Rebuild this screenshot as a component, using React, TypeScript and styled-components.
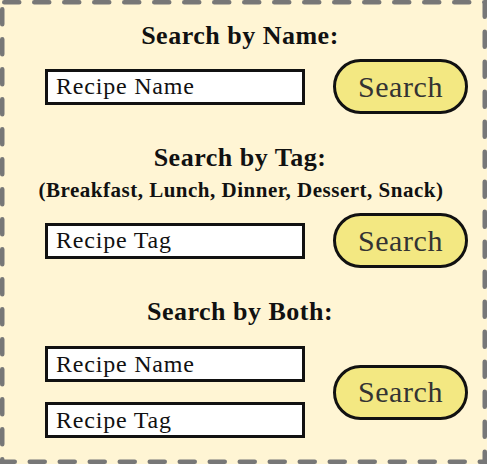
import React from "react";
import styled, { createGlobalStyle } from "styled-components";

const Global = createGlobalStyle`
  html, body { margin: 0; padding: 0; background: #ffffff; }
  * { box-sizing: border-box; }
`;

const Panel = styled.div`
  position: relative;
  width: 487px;
  height: 464px;
  background: #fff5d4;
  padding: 21px 14px 0 45px;
  display: flex;
  flex-direction: column;
  font-family: "Liberation Serif", "Times New Roman", serif;
  color: #111111;
`;

const DashedEdge = styled.svg`
  position: absolute;
  inset: 0;
  width: 100%;
  height: 100%;
  pointer-events: none;
`;

const Section = styled.section<{ $gap: number }>`
  display: flex;
  flex-direction: column;
  margin-top: ${(p) => p.$gap}px;
`;

const Heading = styled.h2`
  margin: 0 0 0 -38px;
  height: 30px;
  line-height: 30px;
  font-size: 26px;
  font-weight: bold;
  letter-spacing: 0.5px;
  text-align: center;
`;

const Sub = styled.div`
  margin: 6px 0 0 -36px;
  height: 22px;
  line-height: 22px;
  font-size: 21px;
  font-weight: bold;
  letter-spacing: 0.5px;
  text-align: center;
`;

const Row = styled.div<{ $top: number }>`
  display: flex;
  align-items: center;
  gap: 28px;
  margin-top: ${(p) => p.$top}px;
`;

const Fields = styled.div`
  display: flex;
  flex-direction: column;
  gap: 20px;
`;

const Field = styled.input`
  width: 260px;
  height: 36px;
  border: 3px solid #111111;
  background: #ffffff;
  padding: 0 0 0 8px;
  font-family: "Liberation Serif", "Times New Roman", serif;
  font-size: 24px;
  letter-spacing: 0.8px;
  outline: none;
  &::placeholder { color: #111111; opacity: 1; }
`;

const Button = styled.button`
  width: 135px;
  height: 55px;
  border: 3px solid #111111;
  border-radius: 28px;
  background: #f3e882;
  font-family: "Liberation Serif", "Times New Roman", serif;
  font-size: 30px;
  letter-spacing: 0.6px;
  color: #333333;
  padding: 0;
  line-height: 1;
  cursor: pointer;
`;

export default function App() {
  return (
    <>
      <Global />
      <Panel>
        <DashedEdge viewBox="0 0 487 464" aria-hidden="true">
          <rect
            x="2.25"
            y="2.25"
            width="482.5"
            height="459.5"
            fill="none"
            stroke="#777777"
            strokeWidth="4.5"
            strokeDasharray="15 15"
            strokeDashoffset="-2"
            strokeLinecap="round"
          />
        </DashedEdge>
        <Section $gap={0}>
          <Heading>Search by Name:</Heading>
          <Row $top={8}>
            <Fields>
              <Field placeholder="Recipe Name" />
            </Fields>
            <Button>Search</Button>
          </Row>
        </Section>
        <Section $gap={29}>
          <Heading>Search by Tag:</Heading>
          <Sub>(Breakfast, Lunch, Dinner, Dessert, Snack)</Sub>
          <Row $top={12}>
            <Fields>
              <Field placeholder="Recipe Tag" />
            </Fields>
            <Button>Search</Button>
          </Row>
        </Section>
        <Section $gap={29}>
          <Heading>Search by Both:</Heading>
          <Row $top={19}>
            <Fields>
              <Field placeholder="Recipe Name" />
              <Field placeholder="Recipe Tag" />
            </Fields>
            <Button>Search</Button>
          </Row>
        </Section>
      </Panel>
    </>
  );
}
